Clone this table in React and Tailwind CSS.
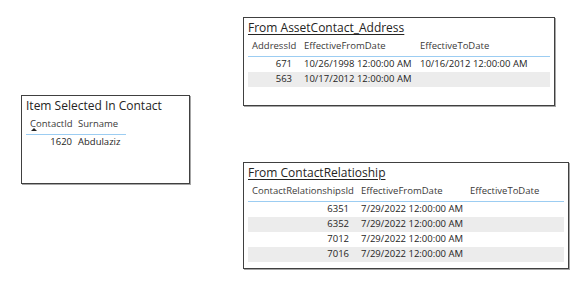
import React from 'react';

const font = { fontFamily: '"Open Sans", "Noto Sans", sans-serif' };

// report visuals: position on the canvas + table config
const addressRows = [
  { id: 671, from: '10/26/1998 12:00:00 AM', to: '10/16/2012 12:00:00 AM' },
  { id: 563, from: '10/17/2012 12:00:00 AM', to: '' },
];

const relationRows = [
  { id: 6351, from: '7/29/2022 12:00:00 AM', to: '' },
  { id: 6352, from: '7/29/2022 12:00:00 AM', to: '' },
  { id: 7012, from: '7/29/2022 12:00:00 AM', to: '' },
  { id: 7016, from: '7/29/2022 12:00:00 AM', to: '' },
];

function Visual({ className, title, underline, children }) {
  return (
    <div className={`absolute bg-white border border-[#404040] shadow-[1px_1px_0_#a6a6a6] px-[4px] pt-[2px] ${className}`}>
      <div className={`h-[16px] leading-[16px] text-[12px] text-[#252423] ${underline ? 'underline underline-offset-2' : ''}`}>
        {title}
      </div>
      {children}
    </div>
  );
}

function HeaderCell({ w, children }) {
  return (
    <div className={`${w} shrink-0 pl-[4px] whitespace-nowrap`}>{children}</div>
  );
}

function Table({ cols, rows }) {
  return (
    <div className="text-[9.5px]">
      <div className="h-[21px] flex items-center text-[#3b3a39] border-b border-[#9ccdf2]">
        {cols.map((c) => (
          <HeaderCell key={c.label} w={c.w}>{c.label}</HeaderCell>
        ))}
      </div>
      {rows.map((r, i) => (
        <div key={r.id} className={`h-[15px] flex items-center text-[#252423] ${i % 2 ? 'bg-[#ececec]' : ''}`}>
          <div className={`${cols[0].w} shrink-0 text-right pr-[8px]`}>{r.id}</div>
          <div className={`${cols[1].w} shrink-0 pl-[4px] whitespace-nowrap`}>{r.from}</div>
          <div className={`${cols[2].w} shrink-0 pl-[4px] whitespace-nowrap`}>{r.to}</div>
        </div>
      ))}
    </div>
  );
}

export default function App() {
  return (
    <div className="relative w-[586px] h-[283px] bg-white overflow-hidden" style={font}>
      <Visual className="left-[243px] top-[17px] w-[312px] h-[89px]" title="From AssetContact_Address" underline>
        <Table
          cols={[
            { label: 'AddressId', w: 'w-[52px]' },
            { label: 'EffectiveFromDate', w: 'w-[116px]' },
            { label: 'EffectiveToDate', w: 'w-[116px]' },
          ]}
          rows={addressRows}
        />
      </Visual>

      <Visual className="left-[21px] top-[95px] w-[169px] h-[89px]" title="Item Selected In Contact">
        <div className="text-[9.5px]">
          <div className="h-[21px] flex items-center text-[#3b3a39] border-b border-[#9ccdf2] w-[100px]">
            <div className="relative w-[48px] shrink-0 pl-[4px]">
              ContactId
              <span className="absolute left-[5px] top-[11px] w-0 h-0 border-l-[3px] border-r-[3px] border-b-[3px] border-l-transparent border-r-transparent border-b-[#252423]" />
            </div>
            <div className="pl-[4px]">Surname</div>
          </div>
          <div className="h-[15px] flex items-center text-[#252423]">
            <div className="w-[48px] shrink-0 text-right pr-[2px]">1620</div>
            <div className="pl-[4px]">Abdulaziz</div>
          </div>
        </div>
      </Visual>

      <Visual className="left-[243px] top-[162px] w-[326px] h-[107px]" title="From ContactRelatioship" underline>
        <Table
          cols={[
            { label: 'ContactRelationshipsId', w: 'w-[109px]' },
            { label: 'EffectiveFromDate', w: 'w-[109px]' },
            { label: 'EffectiveToDate', w: 'w-[75px]' },
          ]}
          rows={relationRows}
        />
      </Visual>
    </div>
  );
}
